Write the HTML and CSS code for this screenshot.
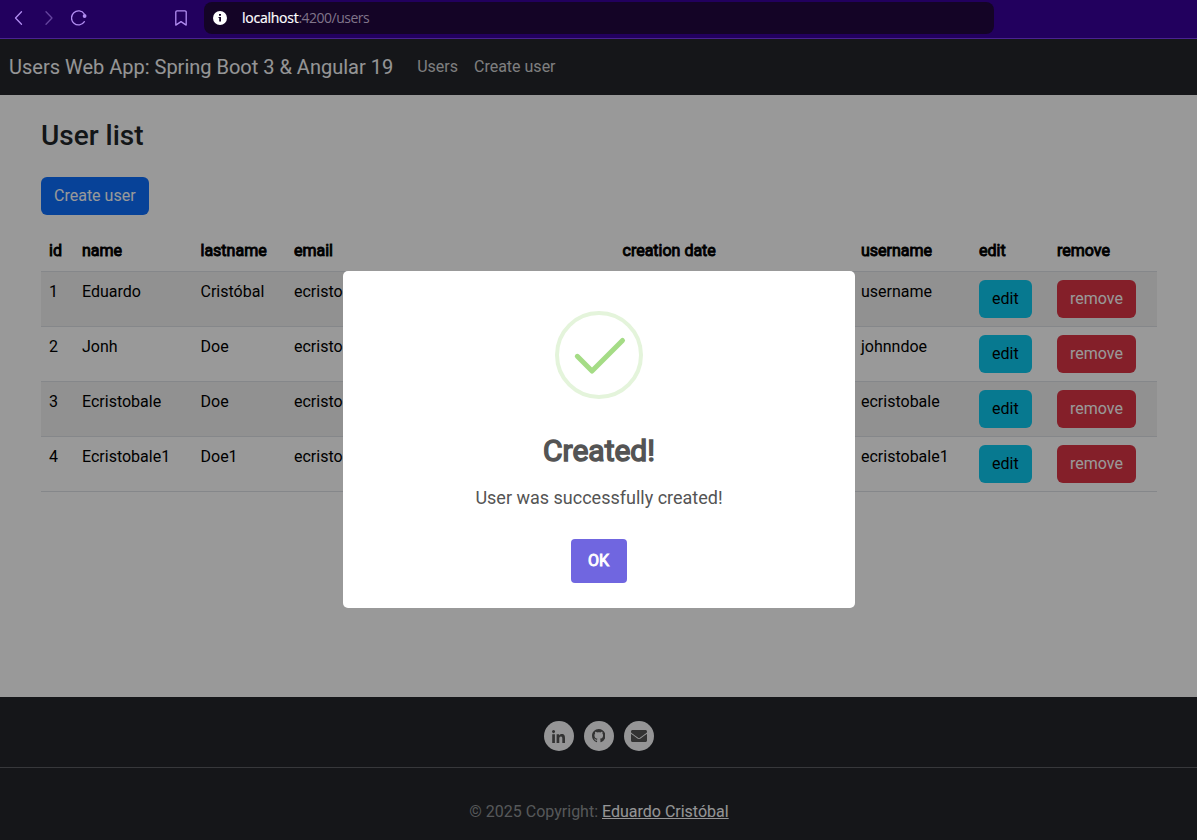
FILE: index.html
```html
<!DOCTYPE html>
<html lang="en">
<head>
<meta charset="utf-8">
<title>Users Web App</title>
<link rel="stylesheet" href="styles.css">
</head>
<body>
<div class="window">
  <header class="browser-bar">
    <div class="browser-nav">
      <svg class="bicon" viewBox="0 0 16 16"><path d="M10.500 1.800 4.500 8l6 6.200"/></svg>
      <svg class="bicon bicon-off" viewBox="0 0 16 16"><path d="M5 1.800 11 8l-6 6.200"/></svg>
      <svg class="bicon" viewBox="0 0 16 16"><path d="M13.400 11.700A7 7 0 1 1 13.300 4"/><circle class="dot" cx="13.600" cy="6" r="1.900"/></svg>
    </div>
    <svg class="bicon bookmark" viewBox="0 0 16 16"><path d="M4 .9h8a1.200 1.200 0 0 1 1.200 1.200v13L8 11.600 2.800 15.100V2.100A1.200 1.200 0 0 1 4 .9z"/></svg>
    <div class="address">
      <svg class="info" viewBox="0 0 14 14"><circle cx="7" cy="7" r="7" fill="#fff"/><path d="M6 3h2v1.700H6zM5.500 6H8v4.500H6.200V7H5.500z" fill="#140426"/></svg>
      <span class="url"><b>localhost</b>:4200/users</span>
    </div>
  </header>
  <div class="viewport">
    <nav class="navbar">
      <a class="brand">Users Web App: Spring Boot 3 &amp; Angular 19</a>
      <a class="nav-link">Users</a>
      <a class="nav-link">Create user</a>
    </nav>
    <main class="content">
      <h3 class="title">User list</h3>
      <button class="btn btn-primary">Create user</button>
      <table class="table">
        <colgroup><col class="c-id"><col class="c-name"><col class="c-last"><col class="c-email"><col class="c-date"><col class="c-user"><col class="c-edit"><col class="c-remove"></colgroup>
        <thead>
          <tr><th>id</th><th>name</th><th>lastname</th><th>email</th><th>creation date</th><th>username</th><th>edit</th><th>remove</th></tr>
        </thead>
        <tbody>
          <tr><td>1</td><td>Eduardo</td><td>Cristóbal</td><td>ecristobal</td><td></td><td>username</td><td><button class="btn btn-info">edit</button></td><td><button class="btn btn-danger">remove</button></td></tr>
          <tr><td>2</td><td>Jonh</td><td>Doe</td><td>ecristobal</td><td></td><td>johnndoe</td><td><button class="btn btn-info">edit</button></td><td><button class="btn btn-danger">remove</button></td></tr>
          <tr><td>3</td><td>Ecristobale</td><td>Doe</td><td>ecristobal</td><td></td><td>ecristobale</td><td><button class="btn btn-info">edit</button></td><td><button class="btn btn-danger">remove</button></td></tr>
          <tr><td>4</td><td>Ecristobale1</td><td>Doe1</td><td>ecristobal</td><td></td><td>ecristobale1</td><td><button class="btn btn-info">edit</button></td><td><button class="btn btn-danger">remove</button></td></tr>
        </tbody>
      </table>
    </main>
    <footer class="footer">
      <div class="social">
        <a class="social-link"><svg viewBox="0 0 448 448" width="13" height="13"><path d="M100.280 448H7.400V148.900h92.880zM53.790 108.100C24.090 108.100 0 83.500 0 53.800a53.790 53.790 0 0 1 107.580 0c0 29.700-24.100 54.300-53.790 54.300zM447.900 448h-92.680V302.400c0-34.700-.7-79.200-48.290-79.200-48.290 0-55.690 37.700-55.690 76.700V448h-92.780V148.900h89.080v40.800h1.300c12.400-23.500 42.690-48.300 87.880-48.300 94 0 111.280 61.900 111.280 142.300V448z"/></svg></a>
        <a class="social-link"><svg viewBox="0 0 16 16" width="13.500" height="13.500"><path d="M8 0C3.580 0 0 3.580 0 8c0 3.540 2.290 6.530 5.470 7.590.4.070.55-.17.55-.38 0-.19-.01-.82-.01-1.490-2.010.37-2.530-.49-2.690-.94-.09-.23-.48-.94-.82-1.130-.28-.15-.68-.52-.01-.53.63-.01 1.080.58 1.230.82.72 1.210 1.870.87 2.330.66.070-.52.28-.87.51-1.070-1.780-.2-3.640-.89-3.640-3.950 0-.87.31-1.590.82-2.150-.08-.2-.36-1.020.08-2.120 0 0 .67-.21 2.200.82.64-.18 1.320-.27 2-.27s1.360.09 2 .27c1.530-1.040 2.200-.82 2.200-.82.44 1.100.16 1.920.08 2.120.51.56.82 1.270.82 2.150 0 3.070-1.870 3.750-3.650 3.950.29.25.54.73.54 1.480 0 1.070-.01 1.930-.01 2.200 0 .21.15.46.55.38A8.010 8.010 0 0 0 16 8c0-4.420-3.580-8-8-8z"/></svg></a>
        <a class="social-link"><svg viewBox="0 0 512 384" width="16" height="12"><path d="M502.300 126.800c3.900-3.100 9.700-.2 9.700 4.700V336c0 26.500-21.500 48-48 48H48c-26.500 0-48-21.500-48-48V131.600c0-5 5.700-7.800 9.700-4.700 22.400 17.400 52.100 39.500 154.100 113.600 21.100 15.400 56.700 47.800 92.200 47.600 35.700.3 72-32.800 92.300-47.600 102-74.100 131.600-96.300 154-113.700zM256 256c23.200.4 56.600-29.200 73.400-41.400 132.700-96.300 142.800-104.700 173.400-128.700 5.800-4.500 9.200-11.500 9.200-18.900V48c0-26.500-21.500-48-48-48H48C21.500 0 0 21.500 0 48v19c0 7.400 3.400 14.300 9.200 18.900 30.600 23.900 40.700 32.400 173.400 128.700 16.800 12.200 50.200 41.800 73.400 41.400z"/></svg></a>
      </div>
      <p class="copyright">© 2025 Copyright: <a class="author">Eduardo Cristóbal</a></p>
    </footer>
    <div class="backdrop">
      <section class="modal" role="dialog">
        <svg class="success" viewBox="0 0 88 88"><circle cx="44" cy="44" r="42"/><path d="M22.300 45.300 37 60 67.500 29.500"/></svg>
        <h2 class="modal-title">Created!</h2>
        <p class="modal-text">User was successfully created!</p>
        <button class="ok">OK</button>
      </section>
    </div>
  </div>
</div>
</body>
</html>
```
FILE: styles.css
```css
* { box-sizing: border-box; }
body { margin: 0; font: 16px/24px Roboto, sans-serif; color: #212529; background: #fff; }
.window { width: 1197px; height: 840px; display: flex; flex-direction: column; overflow: hidden; }

.browser-bar { height: 39px; flex: none; display: flex; align-items: center; padding: 0 0 2px 11px; background: #22005e; border-bottom: 1px solid #4a2391; }
.browser-nav { display: flex; gap: 14px; }
.bicon { display: block; width: 16px; height: 16px; fill: none; stroke: #b28df2; stroke-width: 1.3; stroke-linecap: round; stroke-linejoin: round; }
.bicon-off { stroke: #66459f; }
.dot { fill: #b28df2; stroke: none; }
.bookmark { margin-left: 86px; }
.address { display: flex; align-items: center; width: 790px; height: 32px; margin-left: 15px; padding-left: 9px; border-radius: 8px; background: #140426; }
.info { width: 14px; height: 14px; }
.url { margin-left: 15px; font: 14px/20px "Open Sans", "Noto Sans", sans-serif; letter-spacing: -0.5px; color: #80758a; }
.url b { font-weight: 400; letter-spacing: -0.25px; color: #fff; -webkit-text-stroke: 0.2px #fff; }

.viewport { position: relative; flex: 1; display: flex; flex-direction: column; }
.navbar { height: 56px; display: flex; align-items: center; padding: 0 9px; background: #24262b; }
.brand { margin-right: 16px; font-size: 20px; color: #f8f9fa; }
.nav-link { padding: 0 8px; color: #d3d3d4; }

.content { flex: 1; padding: 24px 40px 0 41px; }
.title { margin: 0 0 24px; font-size: 28px; line-height: 34px; font-weight: 500; }
.btn { display: block; height: 38px; padding: 0 13px; border: 0; border-radius: 6px; font: 16px/24px Roboto, sans-serif; }
.btn-primary { background: #0d6efd; color: #fff; }
.btn-info { background: #0dcaf0; color: #000; }
.btn-danger { background: #dc3545; color: #fff; }
.table { width: 1116px; margin-top: 16px; table-layout: fixed; border-collapse: separate; border-spacing: 0; color: #000; }
.table th, .table td { padding: 8px; text-align: left; vertical-align: top; border-bottom: 1px solid #dee2e6; }
.table th { font-weight: 400; -webkit-text-stroke: 0.9px #000; }
.table tbody tr:nth-child(odd) { background: #f2f2f2; }
.c-id { width: 33px; }
.c-name { width: 118.500px; }
.c-last { width: 93.500px; }
.c-email { width: 328.500px; }
.c-date { width: 238.500px; }
.c-user { width: 118px; }
.c-edit { width: 78px; }
.c-remove { width: 108px; }

.footer { height: 143px; background: #24262b; text-align: center; }
.social { display: flex; justify-content: center; gap: 10px; padding: 24px 0 16px; border-bottom: 1px solid #5c5e63; }
.social-link { display: flex; align-items: center; justify-content: center; width: 30px; height: 30px; border-radius: 50%; background: #f8f9fa; }
.social-link svg { fill: #555; }
.copyright { margin: 32px 0 0; padding-left: 1px; color: #909396; }
.author { color: #f8f9fa; text-decoration: underline; }

.backdrop { position: absolute; inset: 0; display: flex; align-items: center; justify-content: center; background: rgba(0, 0, 0, 0.4); }
.modal { width: 512px; height: 337px; display: flex; flex-direction: column; align-items: center; padding-top: 40px; border-radius: 5px; background: #fff; color: #545454; }
.success { display: block; width: 88px; height: 88px; fill: none; stroke: #e4f4db; stroke-width: 4; }
.success path { stroke: #a5dc86; stroke-width: 5; stroke-linecap: round; stroke-linejoin: round; }
.modal-title { margin: 34px 0 0; padding-left: 1px; font-size: 30px; line-height: 36px; font-weight: 400; -webkit-text-stroke: 1.5px #545454; }
.modal-text { margin: 17px 0 0; padding-left: 1px; font-size: 18px; line-height: 24px; }
.ok { width: 56px; height: 44px; margin-top: 29px; padding: 0; border: 0; border-radius: 4px; background: #7066e0; color: #fff; font: 16px/24px Roboto, sans-serif; -webkit-text-stroke: 0.9px #fff; }
```
